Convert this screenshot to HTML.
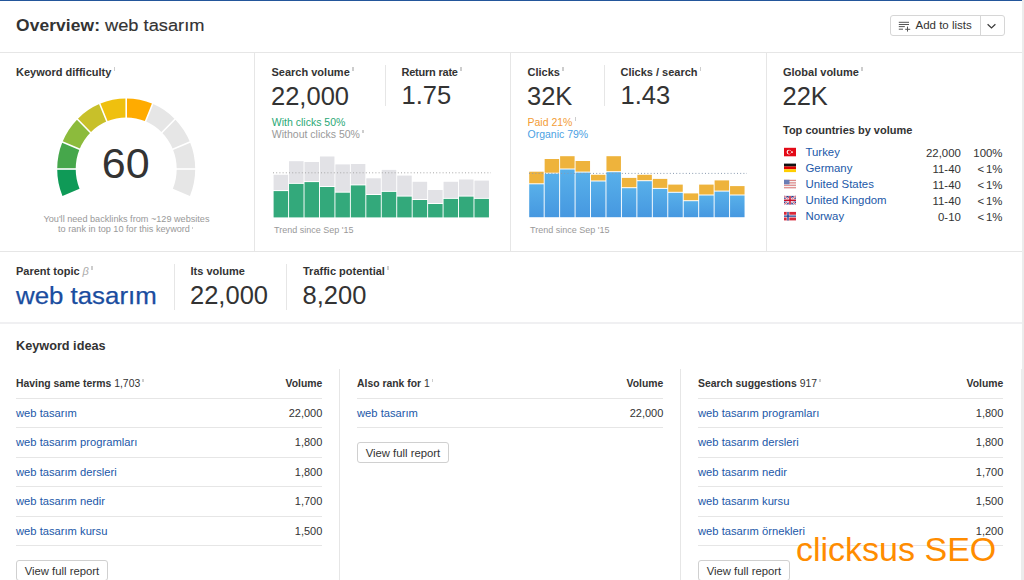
<!DOCTYPE html>
<html><head><meta charset="utf-8"><style>
html,body{margin:0;padding:0;}
body{width:1024px;height:580px;position:relative;overflow:hidden;background:#fff;font-family:'Liberation Sans', sans-serif;}
.t{position:absolute;line-height:0;white-space:nowrap;}
.i{position:relative;display:inline-block;width:5px;height:0}
.i::after{content:'';position:absolute;left:0.22em;bottom:0.47em;width:1.4px;height:0.34em;background:#cdcdcd}
.i2::after{bottom:0.26em;height:0.22em}
.beta{font-style:italic;font-weight:400;color:#aaa;margin-left:3px}
</style></head><body>
<div style="position:absolute;left:0px;top:0px;width:1022px;height:1px;background:#23569b;"></div>
<div style="position:absolute;left:1022px;top:0px;width:2px;height:369px;background:#ececec;"></div>
<div style="position:absolute;left:1021px;top:369px;width:3px;height:211px;background:#ececec;"></div>
<div class="t" style="left:16.00px;top:24.77px;font-size:17.4px;font-weight:700;color:#333;letter-spacing:0.1px">Overview:</div>
<div class="t" style="left:104.60px;top:24.77px;font-size:17.4px;font-weight:400;color:#333;transform:scaleX(1.05);transform-origin:0 0;-webkit-text-stroke:0.15px #333">web tasarım</div>
<div style="position:absolute;left:890px;top:15px;width:115px;height:21px;box-sizing:border-box;border:1px solid #d6d6d6;border-radius:3px;background:#fff"></div>
<div style="position:absolute;left:980px;top:15px;width:1px;height:21px;background:#d6d6d6;"></div>
<svg style="position:absolute;left:897px;top:19px" width="16" height="16" viewBox="0 0 16 16">
<g stroke="#555" stroke-width="1" fill="none">
<line x1="1.8" y1="3.3" x2="12" y2="3.3"/><line x1="1.8" y1="5.5" x2="12" y2="5.5"/><line x1="1.8" y1="7.6" x2="7.8" y2="7.6"/><line x1="1.8" y1="10.2" x2="6" y2="10.2"/>
<line x1="8.2" y1="10.3" x2="13.2" y2="10.3"/><line x1="10.5" y1="7.6" x2="10.5" y2="12.6"/></g></svg>
<div class="t" style="left:915.50px;top:25.22px;font-size:11.5px;font-weight:400;color:#333;">Add to lists</div>
<svg style="position:absolute;left:986px;top:21px" width="12" height="10" viewBox="0 0 12 10"><polyline points="1.6,3.2 5.5,7 9.4,3.2" stroke="#3a3a3a" stroke-width="1.2" fill="none"/></svg>
<div style="position:absolute;left:0px;top:52px;width:1022px;height:1px;background:#e6e6e6;"></div>
<div style="position:absolute;left:0px;top:251px;width:1022px;height:1px;background:#e6e6e6;"></div>
<div style="position:absolute;left:0px;top:322px;width:1022px;height:2px;background:#f0f0f2;"></div>
<div style="position:absolute;left:254px;top:52px;width:1px;height:199px;background:#e6e6e6;"></div>
<div style="position:absolute;left:510px;top:52px;width:1px;height:199px;background:#e6e6e6;"></div>
<div style="position:absolute;left:766px;top:52px;width:1px;height:199px;background:#e6e6e6;"></div>
<div class="t" style="left:16.00px;top:71.99px;font-size:11px;font-weight:700;color:#333;">Keyword difficulty<span class="i"></span></div>
<svg style="position:absolute;left:0;top:0" width="256" height="250"><path d="M62.45,195.99 A69,70.52 0 0 1 57.20,169.00 L75.70,169.00 A50.5,51.61 0 0 0 79.54,188.75 Z" fill="#0f9a57"/><path d="M57.20,169.00 A69,70.52 0 0 1 62.45,142.01 L79.54,149.25 A50.5,51.61 0 0 0 75.70,169.00 Z" fill="#46a74b"/><path d="M62.45,142.01 A69,70.52 0 0 1 77.41,119.14 L90.49,132.51 A50.5,51.61 0 0 0 79.54,149.25 Z" fill="#8cbb3c"/><path d="M77.41,119.14 A69,70.52 0 0 1 99.79,103.85 L106.87,121.32 A50.5,51.61 0 0 0 90.49,132.51 Z" fill="#c8c02a"/><path d="M99.79,103.85 A69,70.52 0 0 1 126.20,98.48 L126.20,117.39 A50.5,51.61 0 0 0 106.87,121.32 Z" fill="#efc00e"/><path d="M126.20,98.48 A69,70.52 0 0 1 152.61,103.85 L145.53,121.32 A50.5,51.61 0 0 0 126.20,117.39 Z" fill="#ffab00"/><path d="M152.61,103.85 A69,70.52 0 0 1 174.99,119.14 L161.91,132.51 A50.5,51.61 0 0 0 145.53,121.32 Z" fill="#e6e6e6"/><path d="M174.99,119.14 A69,70.52 0 0 1 189.95,142.01 L172.86,149.25 A50.5,51.61 0 0 0 161.91,132.51 Z" fill="#e6e6e6"/><path d="M189.95,142.01 A69,70.52 0 0 1 195.20,169.00 L176.70,169.00 A50.5,51.61 0 0 0 172.86,149.25 Z" fill="#e6e6e6"/><path d="M195.20,169.00 A69,70.52 0 0 1 189.95,195.99 L172.86,188.75 A50.5,51.61 0 0 0 176.70,169.00 Z" fill="#e6e6e6"/><line x1="77.70" y1="169.00" x2="55.20" y2="169.00" stroke="#fff" stroke-width="1.6"/><line x1="81.39" y1="150.03" x2="60.60" y2="141.23" stroke="#fff" stroke-width="1.6"/><line x1="91.91" y1="133.95" x2="76.00" y2="117.69" stroke="#fff" stroke-width="1.6"/><line x1="107.64" y1="123.21" x2="99.03" y2="101.96" stroke="#fff" stroke-width="1.6"/><line x1="126.20" y1="119.43" x2="126.20" y2="96.44" stroke="#fff" stroke-width="1.6"/><line x1="144.76" y1="123.21" x2="153.37" y2="101.96" stroke="#fff" stroke-width="1.6"/><line x1="160.49" y1="133.95" x2="176.40" y2="117.69" stroke="#fff" stroke-width="1.6"/><line x1="171.01" y1="150.03" x2="191.80" y2="141.23" stroke="#fff" stroke-width="1.6"/><line x1="174.70" y1="169.00" x2="197.20" y2="169.00" stroke="#fff" stroke-width="1.6"/></svg>
<div class="t" style="left:-174.30px;width:600px;text-align:center;top:162.90px;font-size:43px;font-weight:400;color:#333;">60</div>
<div class="t" style="left:-173.50px;width:600px;text-align:center;top:218.63px;font-size:9.15px;font-weight:400;color:#999;">You'll need backlinks from ~129 websites</div>
<div class="t" style="left:-173.50px;width:600px;text-align:center;top:228.53px;font-size:9.15px;font-weight:400;color:#999;">to rank in top 10 for this keyword<span class="i i2"></span></div>
<div class="t" style="left:271.50px;top:71.99px;font-size:11px;font-weight:700;color:#333;">Search volume<span class="i"></span></div>
<div class="t" style="left:271.00px;top:95.66px;font-size:25.5px;font-weight:400;color:#333;">22,000</div>
<div style="position:absolute;left:385px;top:65px;width:1px;height:41px;background:#e6e6e6;"></div>
<div class="t" style="left:401.50px;top:71.99px;font-size:11px;font-weight:700;color:#333;letter-spacing:-0.22px">Return rate<span class="i"></span></div>
<div class="t" style="left:401.50px;top:94.96px;font-size:25.5px;font-weight:400;color:#333;">1.75</div>
<div class="t" style="left:271.80px;top:121.56px;font-size:10.5px;font-weight:400;color:#2aa876;">With clicks 50%</div>
<div class="t" style="left:271.80px;top:134.06px;font-size:10.5px;font-weight:400;color:#999;">Without clicks 50%<span class="i"></span></div>
<svg style="position:absolute;left:0;top:0" width="1024" height="250"><rect x="273.60" y="174.80" width="14.5" height="15.30" fill="#e2e2e6"/><rect x="273.60" y="191.10" width="14.5" height="26.30" fill="#33a97b"/><rect x="289.05" y="161.20" width="14.5" height="21.70" fill="#e2e2e6"/><rect x="289.05" y="183.90" width="14.5" height="33.50" fill="#33a97b"/><rect x="304.50" y="162.00" width="14.5" height="19.10" fill="#e2e2e6"/><rect x="304.50" y="182.10" width="14.5" height="35.30" fill="#33a97b"/><rect x="319.95" y="156.50" width="14.5" height="29.50" fill="#e2e2e6"/><rect x="319.95" y="187.00" width="14.5" height="30.40" fill="#33a97b"/><rect x="335.40" y="164.40" width="14.5" height="27.30" fill="#e2e2e6"/><rect x="335.40" y="192.70" width="14.5" height="24.70" fill="#33a97b"/><rect x="350.85" y="164.00" width="14.5" height="20.40" fill="#e2e2e6"/><rect x="350.85" y="185.40" width="14.5" height="32.00" fill="#33a97b"/><rect x="366.30" y="178.30" width="14.5" height="15.70" fill="#e2e2e6"/><rect x="366.30" y="195.00" width="14.5" height="22.40" fill="#33a97b"/><rect x="381.75" y="169.90" width="14.5" height="21.00" fill="#e2e2e6"/><rect x="381.75" y="191.90" width="14.5" height="25.50" fill="#33a97b"/><rect x="397.20" y="175.60" width="14.5" height="20.00" fill="#e2e2e6"/><rect x="397.20" y="196.60" width="14.5" height="20.80" fill="#33a97b"/><rect x="412.65" y="181.80" width="14.5" height="17.20" fill="#e2e2e6"/><rect x="412.65" y="200.00" width="14.5" height="17.40" fill="#33a97b"/><rect x="428.10" y="190.00" width="14.5" height="13.00" fill="#e2e2e6"/><rect x="428.10" y="204.00" width="14.5" height="13.40" fill="#33a97b"/><rect x="443.55" y="181.80" width="14.5" height="16.10" fill="#e2e2e6"/><rect x="443.55" y="198.90" width="14.5" height="18.50" fill="#33a97b"/><rect x="459.00" y="179.50" width="14.5" height="16.10" fill="#e2e2e6"/><rect x="459.00" y="196.60" width="14.5" height="20.80" fill="#33a97b"/><rect x="474.45" y="180.60" width="14.5" height="17.30" fill="#e2e2e6"/><rect x="474.45" y="198.90" width="14.5" height="18.50" fill="#33a97b"/><line x1="273" y1="172.8" x2="491" y2="172.8" stroke="#a8a8a8" stroke-width="1" stroke-dasharray="1,2.2"/>
<defs><linearGradient id="bl" x1="0" y1="0" x2="0" y2="1"><stop offset="0" stop-color="#58b0ea"/><stop offset="1" stop-color="#4698e0"/></linearGradient></defs><rect x="529.20" y="171.70" width="14.5" height="11.60" fill="#eeb33c"/><rect x="529.20" y="184.30" width="14.5" height="32.90" fill="url(#bl)"/><rect x="544.65" y="159.00" width="14.5" height="13.70" fill="#eeb33c"/><rect x="544.65" y="173.70" width="14.5" height="43.50" fill="url(#bl)"/><rect x="560.10" y="156.20" width="14.5" height="12.30" fill="#eeb33c"/><rect x="560.10" y="169.50" width="14.5" height="47.70" fill="url(#bl)"/><rect x="575.55" y="161.00" width="14.5" height="10.60" fill="#eeb33c"/><rect x="575.55" y="172.60" width="14.5" height="44.60" fill="url(#bl)"/><rect x="591.00" y="174.80" width="14.5" height="5.70" fill="#eeb33c"/><rect x="591.00" y="181.50" width="14.5" height="35.70" fill="url(#bl)"/><rect x="606.45" y="156.20" width="14.5" height="15.00" fill="#eeb33c"/><rect x="606.45" y="172.20" width="14.5" height="45.00" fill="url(#bl)"/><rect x="621.90" y="177.90" width="14.5" height="9.30" fill="#eeb33c"/><rect x="621.90" y="188.20" width="14.5" height="29.00" fill="url(#bl)"/><rect x="637.35" y="174.80" width="14.5" height="5.40" fill="#eeb33c"/><rect x="637.35" y="181.20" width="14.5" height="36.00" fill="url(#bl)"/><rect x="652.80" y="178.90" width="14.5" height="9.00" fill="#eeb33c"/><rect x="652.80" y="188.90" width="14.5" height="28.30" fill="url(#bl)"/><rect x="668.25" y="184.60" width="14.5" height="7.20" fill="#eeb33c"/><rect x="668.25" y="192.80" width="14.5" height="24.40" fill="url(#bl)"/><rect x="683.70" y="193.40" width="14.5" height="6.80" fill="#eeb33c"/><rect x="683.70" y="201.20" width="14.5" height="16.00" fill="url(#bl)"/><rect x="699.15" y="184.60" width="14.5" height="9.90" fill="#eeb33c"/><rect x="699.15" y="195.50" width="14.5" height="21.70" fill="url(#bl)"/><rect x="714.60" y="180.40" width="14.5" height="10.20" fill="#eeb33c"/><rect x="714.60" y="191.60" width="14.5" height="25.60" fill="url(#bl)"/><rect x="730.05" y="186.10" width="14.5" height="8.40" fill="#eeb33c"/><rect x="730.05" y="195.50" width="14.5" height="21.70" fill="url(#bl)"/><line x1="529" y1="173.4" x2="747" y2="173.4" stroke="#8a9bb0" stroke-width="1" stroke-dasharray="1,2.2"/></svg>
<div class="t" style="left:274.00px;top:229.88px;font-size:9px;font-weight:400;color:#999;">Trend since Sep '15</div>
<div class="t" style="left:530.00px;top:229.68px;font-size:9px;font-weight:400;color:#999;">Trend since Sep '15</div>
<div class="t" style="left:527.50px;top:71.99px;font-size:11px;font-weight:700;color:#333;">Clicks<span class="i"></span></div>
<div class="t" style="left:527.00px;top:95.66px;font-size:25.5px;font-weight:400;color:#333;">32K</div>
<div style="position:absolute;left:604px;top:65px;width:1px;height:41px;background:#e6e6e6;"></div>
<div class="t" style="left:620.50px;top:71.99px;font-size:11px;font-weight:700;color:#333;">Clicks / search<span class="i"></span></div>
<div class="t" style="left:620.50px;top:94.96px;font-size:25.5px;font-weight:400;color:#333;">1.43</div>
<div class="t" style="left:527.50px;top:121.56px;font-size:10.5px;font-weight:400;color:#f39c35;">Paid 21%<span class="i"></span></div>
<div class="t" style="left:527.50px;top:134.16px;font-size:10.5px;font-weight:400;color:#4c9fe3;">Organic 79%</div>
<div class="t" style="left:783.00px;top:72.09px;font-size:11px;font-weight:700;color:#333;">Global volume<span class="i"></span></div>
<div class="t" style="left:782.50px;top:95.96px;font-size:25.5px;font-weight:400;color:#333;">22K</div>
<div class="t" style="left:783.00px;top:129.99px;font-size:11px;font-weight:700;color:#333;">Top countries by volume</div>
<div class="t" style="left:805.50px;top:152.45px;font-size:11.4px;font-weight:400;color:#2158a8;">Turkey</div>
<div class="t" style="right:63.20px;top:152.95px;font-size:11.4px;font-weight:400;color:#333;">22,000</div>
<div class="t" style="right:21.50px;top:152.95px;font-size:11.4px;font-weight:400;color:#333;">100%</div>
<div class="t" style="left:805.50px;top:168.45px;font-size:11.4px;font-weight:400;color:#2158a8;">Germany</div>
<div class="t" style="right:63.20px;top:168.95px;font-size:11.4px;font-weight:400;color:#333;">11-40</div>
<div class="t" style="right:21.50px;top:168.95px;font-size:11.4px;font-weight:400;color:#333;">&lt;<span style="margin-left:2px"></span>1%</div>
<div class="t" style="left:805.50px;top:184.45px;font-size:11.4px;font-weight:400;color:#2158a8;">United States</div>
<div class="t" style="right:63.20px;top:184.95px;font-size:11.4px;font-weight:400;color:#333;">11-40</div>
<div class="t" style="right:21.50px;top:184.95px;font-size:11.4px;font-weight:400;color:#333;">&lt;<span style="margin-left:2px"></span>1%</div>
<div class="t" style="left:805.50px;top:200.45px;font-size:11.4px;font-weight:400;color:#2158a8;">United Kingdom</div>
<div class="t" style="right:63.20px;top:200.95px;font-size:11.4px;font-weight:400;color:#333;">11-40</div>
<div class="t" style="right:21.50px;top:200.95px;font-size:11.4px;font-weight:400;color:#333;">&lt;<span style="margin-left:2px"></span>1%</div>
<div class="t" style="left:805.50px;top:216.45px;font-size:11.4px;font-weight:400;color:#2158a8;">Norway</div>
<div class="t" style="right:63.20px;top:216.95px;font-size:11.4px;font-weight:400;color:#333;">0-10</div>
<div class="t" style="right:21.50px;top:216.95px;font-size:11.4px;font-weight:400;color:#333;">&lt;<span style="margin-left:2px"></span>1%</div>
<svg style="position:absolute;left:0;top:0" width="1024" height="250"><g transform="translate(784,147.8)"><rect width="12" height="8.5" fill="#e30a17"/><circle cx="5" cy="4.25" r="2.4" fill="#fff"/><circle cx="5.6" cy="4.25" r="1.9" fill="#e30a17"/><circle cx="8" cy="4.25" r="0.9" fill="#fff"/></g><g transform="translate(784,163.6)"><rect width="12" height="2.9" fill="#111"/><rect y="2.85" width="12" height="2.85" fill="#dd0000"/><rect y="5.7" width="12" height="2.8" fill="#ffce00"/></g><g transform="translate(784,179.8)"><rect width="12" height="8.5" fill="#f4f4f4"/><rect y="0.00" width="12" height="1.22" fill="#d88"/><rect y="2.44" width="12" height="1.22" fill="#d88"/><rect y="4.88" width="12" height="1.22" fill="#d88"/><rect y="7.32" width="12" height="1.22" fill="#d88"/><rect width="5.5" height="4.5" fill="#6a7db5"/></g><g transform="translate(784,195.9)"><rect width="12" height="8.5" fill="#2a3a8a"/><path d="M0,0 L12,8.5 M12,0 L0,8.5" stroke="#fff" stroke-width="1.8"/><path d="M0,0 L12,8.5 M12,0 L0,8.5" stroke="#c8102e" stroke-width="0.7"/><path d="M6,0 V8.5 M0,4.25 H12" stroke="#fff" stroke-width="2.6"/><path d="M6,0 V8.5 M0,4.25 H12" stroke="#c8102e" stroke-width="1.5"/></g><g transform="translate(784,211.9)"><rect width="12" height="8.5" fill="#d8283a"/><path d="M4,0 V8.5 M0,4.25 H12" stroke="#fff" stroke-width="2.6"/><path d="M4,0 V8.5 M0,4.25 H12" stroke="#1f3f8f" stroke-width="1.4"/></g></svg>
<div class="t" style="left:16.00px;top:271.19px;font-size:11px;font-weight:700;color:#333;">Parent topic<span class="beta">β</span><span class="i"></span></div>
<div class="t" style="left:16.20px;top:295.61px;font-size:24.2px;font-weight:400;color:#1a4d9f;transform:scaleX(1.068);transform-origin:0 0;-webkit-text-stroke:0.25px #1a4d9f">web tasarım</div>
<div style="position:absolute;left:174px;top:264px;width:1px;height:46px;background:#e6e6e6;"></div>
<div class="t" style="left:190.50px;top:271.39px;font-size:11px;font-weight:700;color:#333;">Its volume</div>
<div class="t" style="left:190.00px;top:294.66px;font-size:25.5px;font-weight:400;color:#333;">22,000</div>
<div style="position:absolute;left:286px;top:264px;width:1px;height:46px;background:#e6e6e6;"></div>
<div class="t" style="left:303.00px;top:271.39px;font-size:11px;font-weight:700;color:#333;">Traffic potential<span class="i"></span></div>
<div class="t" style="left:302.50px;top:294.66px;font-size:25.5px;font-weight:400;color:#333;">8,200</div>
<div class="t" style="left:16.00px;top:346.00px;font-size:12.7px;font-weight:700;color:#333;">Keyword ideas</div>
<div style="position:absolute;left:339px;top:369px;width:1px;height:211px;background:#e6e6e6;"></div>
<div style="position:absolute;left:680px;top:369px;width:1px;height:211px;background:#e6e6e6;"></div>
<div class="t" style="left:16.00px;top:384.00px;font-size:10.4px;font-weight:700;color:#333;">Having same terms <span style="font-weight:400">1,703</span><span class="i"></span></div>
<div class="t" style="right:701.70px;top:384.00px;font-size:10.4px;font-weight:700;color:#333;">Volume</div>
<div style="position:absolute;left:16px;top:397.5px;width:306px;height:1px;background:#e6e6e6;"></div>
<div class="t" style="left:16.00px;top:412.72px;font-size:11.2px;font-weight:400;color:#2158a8;">web tasarım</div>
<div class="t" style="right:701.70px;top:412.79px;font-size:11px;font-weight:400;color:#333;">22,000</div>
<div style="position:absolute;left:16px;top:427.0px;width:306px;height:1px;background:#e6e6e6;"></div>
<div class="t" style="left:16.00px;top:442.22px;font-size:11.2px;font-weight:400;color:#2158a8;">web tasarım programları</div>
<div class="t" style="right:701.70px;top:442.29px;font-size:11px;font-weight:400;color:#333;">1,800</div>
<div style="position:absolute;left:16px;top:456.5px;width:306px;height:1px;background:#e6e6e6;"></div>
<div class="t" style="left:16.00px;top:471.72px;font-size:11.2px;font-weight:400;color:#2158a8;">web tasarım dersleri</div>
<div class="t" style="right:701.70px;top:471.79px;font-size:11px;font-weight:400;color:#333;">1,800</div>
<div style="position:absolute;left:16px;top:486.0px;width:306px;height:1px;background:#e6e6e6;"></div>
<div class="t" style="left:16.00px;top:501.22px;font-size:11.2px;font-weight:400;color:#2158a8;">web tasarım nedir</div>
<div class="t" style="right:701.70px;top:501.29px;font-size:11px;font-weight:400;color:#333;">1,700</div>
<div style="position:absolute;left:16px;top:515.5px;width:306px;height:1px;background:#e6e6e6;"></div>
<div class="t" style="left:16.00px;top:530.72px;font-size:11.2px;font-weight:400;color:#2158a8;">web tasarım kursu</div>
<div class="t" style="right:701.70px;top:530.79px;font-size:11px;font-weight:400;color:#333;">1,500</div>
<div style="position:absolute;left:16px;top:545.0px;width:306px;height:1px;background:#e6e6e6;"></div>
<div style="position:absolute;left:16px;top:560.0px;width:90px;height:18.5px;border:1px solid #d0d0d0;border-radius:3px;background:#fff"></div>
<div class="t" style="left:24.70px;top:570.88px;font-size:11.3px;font-weight:400;color:#333;">View full report</div>
<div class="t" style="left:357.00px;top:384.00px;font-size:10.4px;font-weight:700;color:#333;">Also rank for <span style="font-weight:400">1</span><span class="i"></span></div>
<div class="t" style="right:360.70px;top:384.00px;font-size:10.4px;font-weight:700;color:#333;">Volume</div>
<div style="position:absolute;left:357px;top:397.5px;width:306px;height:1px;background:#e6e6e6;"></div>
<div class="t" style="left:357.00px;top:412.72px;font-size:11.2px;font-weight:400;color:#2158a8;">web tasarım</div>
<div class="t" style="right:360.70px;top:412.79px;font-size:11px;font-weight:400;color:#333;">22,000</div>
<div style="position:absolute;left:357px;top:427.0px;width:306px;height:1px;background:#e6e6e6;"></div>
<div style="position:absolute;left:357px;top:442.0px;width:90px;height:18.5px;border:1px solid #d0d0d0;border-radius:3px;background:#fff"></div>
<div class="t" style="left:365.70px;top:452.88px;font-size:11.3px;font-weight:400;color:#333;">View full report</div>
<div class="t" style="left:698.00px;top:384.00px;font-size:10.4px;font-weight:700;color:#333;">Search suggestions <span style="font-weight:400">917</span><span class="i"></span></div>
<div class="t" style="right:20.70px;top:384.00px;font-size:10.4px;font-weight:700;color:#333;">Volume</div>
<div style="position:absolute;left:698px;top:397.5px;width:305px;height:1px;background:#e6e6e6;"></div>
<div class="t" style="left:698.00px;top:412.72px;font-size:11.2px;font-weight:400;color:#2158a8;">web tasarım programları</div>
<div class="t" style="right:20.70px;top:412.79px;font-size:11px;font-weight:400;color:#333;">1,800</div>
<div style="position:absolute;left:698px;top:427.0px;width:305px;height:1px;background:#e6e6e6;"></div>
<div class="t" style="left:698.00px;top:442.22px;font-size:11.2px;font-weight:400;color:#2158a8;">web tasarım dersleri</div>
<div class="t" style="right:20.70px;top:442.29px;font-size:11px;font-weight:400;color:#333;">1,800</div>
<div style="position:absolute;left:698px;top:456.5px;width:305px;height:1px;background:#e6e6e6;"></div>
<div class="t" style="left:698.00px;top:471.72px;font-size:11.2px;font-weight:400;color:#2158a8;">web tasarım nedir</div>
<div class="t" style="right:20.70px;top:471.79px;font-size:11px;font-weight:400;color:#333;">1,700</div>
<div style="position:absolute;left:698px;top:486.0px;width:305px;height:1px;background:#e6e6e6;"></div>
<div class="t" style="left:698.00px;top:501.22px;font-size:11.2px;font-weight:400;color:#2158a8;">web tasarım kursu</div>
<div class="t" style="right:20.70px;top:501.29px;font-size:11px;font-weight:400;color:#333;">1,500</div>
<div style="position:absolute;left:698px;top:515.5px;width:305px;height:1px;background:#e6e6e6;"></div>
<div class="t" style="left:698.00px;top:530.72px;font-size:11.2px;font-weight:400;color:#2158a8;">web tasarım örnekleri</div>
<div class="t" style="right:20.70px;top:530.79px;font-size:11px;font-weight:400;color:#333;">1,200</div>
<div style="position:absolute;left:698px;top:545.0px;width:305px;height:1px;background:#e6e6e6;"></div>
<div style="position:absolute;left:698px;top:560.0px;width:90px;height:18.5px;border:1px solid #d0d0d0;border-radius:3px;background:#fff"></div>
<div class="t" style="left:706.70px;top:570.88px;font-size:11.3px;font-weight:400;color:#333;">View full report</div>
<div class="t" style="left:796.00px;top:549.22px;font-size:34px;font-weight:400;color:#ff8c00;">clicksus SEO</div>
</body></html>
